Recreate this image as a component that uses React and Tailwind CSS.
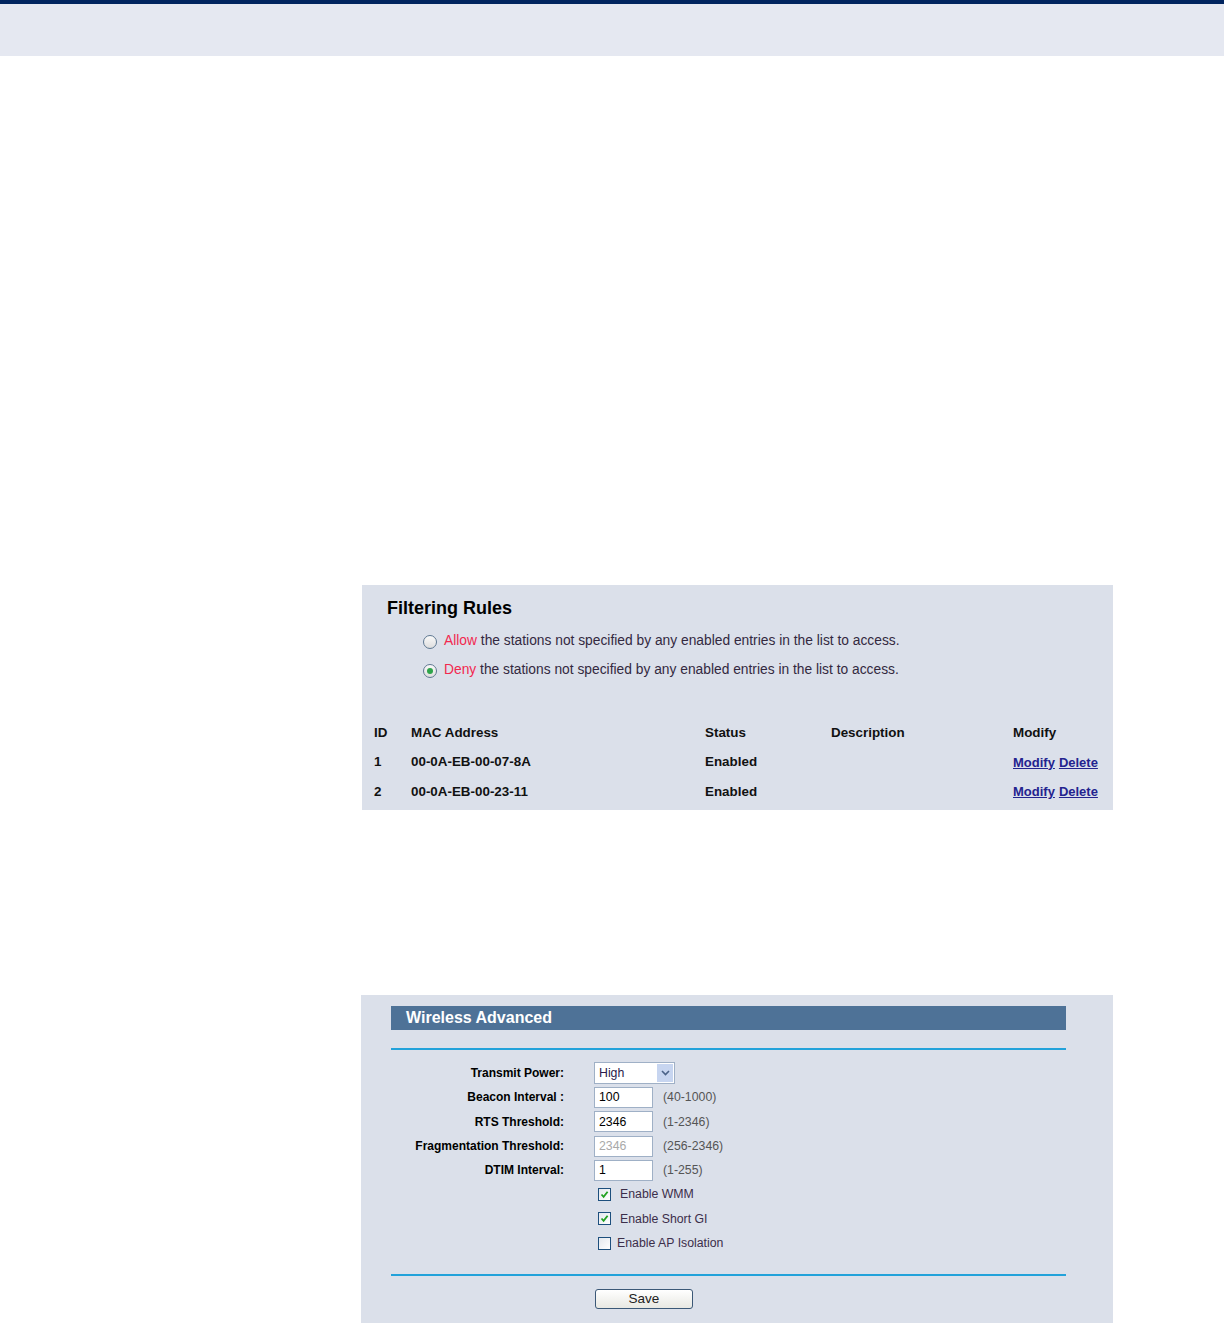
import { Fragment } from "react";

const rules = [
  { id: "1", mac: "00-0A-EB-00-07-8A", status: "Enabled", desc: "" },
  { id: "2", mac: "00-0A-EB-00-23-11", status: "Enabled", desc: "" },
];

const Radio = ({ checked }) => (
  <span className="flex h-[14px] w-[14px] items-center justify-center rounded-full border border-[#5f7891] bg-gradient-to-b from-[#fafafa] to-[#dedede]">
    {checked && <span className="h-[6px] w-[6px] rounded-full bg-[#2ea44a]" />}
  </span>
);

const Check = ({ checked }) => (
  <span className="flex h-[13px] w-[13px] items-center justify-center border border-[#1d4f7d] bg-gradient-to-br from-[#e4e8ee] to-[#ffffff]">
    {checked && (
      <svg width="9" height="9" viewBox="0 0 9 9">
        <path d="M1.5 4.5 L3.6 6.8 L7.6 1.8" fill="none" stroke="#21a121" strokeWidth="1.8" />
      </svg>
    )}
  </span>
);

const TextBox = ({ value, disabled }) => (
  <div
    className={`flex h-[21px] w-[59px] items-center border border-[#9fb0c6] bg-white px-[4px] text-[12.3px] ${
      disabled ? "text-[#a9a9a9]" : "text-black"
    }`}
  >
    {value}
  </div>
);

const FormRow = ({ label, children, hint }) => (
  <div className="flex h-[24.3px] items-center">
    <div className="w-[173px] text-right text-[12px] font-bold text-black">{label}</div>
    <div className="ml-[30px] flex items-center">
      {children}
      {hint && <span className="ml-[10px] text-[12.3px] text-[#555]">{hint}</span>}
    </div>
  </div>
);

const CheckRow = ({ checked, label, gap }) => (
  <div className="flex h-[24.3px] items-center">
    <div className="ml-[207px] flex items-center">
      <Check checked={checked} />
      <span className={`${gap} text-[12.3px] text-[#3b2e4a]`}>{label}</span>
    </div>
  </div>
);

export default function App() {
  return (
    <div className="relative h-[1323px] w-[1224px] overflow-hidden bg-white font-['Liberation_Sans',Arial,sans-serif]">
      <div className="h-[4px] bg-[#00245f]" />
      <div className="h-[52px] bg-[#e5e8f1]" />

      {/* Filtering rules */}
      <div className="ml-[362px] mt-[529px] h-[225px] w-[751px] bg-[#dbe0ea] pt-[12px]">
        <div className="pl-[25px] text-[18px] font-bold leading-[22px] text-black">Filtering Rules</div>
        <div className="mt-[8px] pl-[61px] text-[13.8px] text-[#33293f]">
          <div className="flex h-[29px] items-center gap-[7px]">
            <Radio />
            <span>
              <span className="text-[#f2284f]">Allow</span> the stations not specified by any enabled entries in the list to access.
            </span>
          </div>
          <div className="flex h-[29px] items-center gap-[7px]">
            <Radio checked />
            <span>
              <span className="text-[#f2284f]">Deny</span> the stations not specified by any enabled entries in the list to access.
            </span>
          </div>
        </div>
        <div className="mt-[33px] grid grid-cols-[37px_294px_126px_182px_1fr] pl-[12px] text-[13.4px] font-bold text-[#111]">
          <div className="flex h-[29.5px] items-center">ID</div>
          <div className="flex h-[29.5px] items-center">MAC Address</div>
          <div className="flex h-[29.5px] items-center">Status</div>
          <div className="flex h-[29.5px] items-center">Description</div>
          <div className="flex h-[29.5px] items-center">Modify</div>
          {rules.map((r) => (
            <Fragment key={r.id}>
              <div className="flex h-[29.5px] items-center">{r.id}</div>
              <div className="flex h-[29.5px] items-center">{r.mac}</div>
              <div className="flex h-[29.5px] items-center">{r.status}</div>
              <div className="flex h-[29.5px] items-center">{r.desc}</div>
              <div className="flex h-[29.5px] items-center gap-[4px] text-[13px] text-[#23238f]">
                <a className="underline">Modify</a>
                <a className="underline">Delete</a>
              </div>
            </Fragment>
          ))}
        </div>
      </div>

      {/* Wireless advanced */}
      <div className="ml-[361px] mt-[185px] h-[328px] w-[752px] bg-[#dbe0ea] pl-[30px] pt-[11px]">
        <div className="flex h-[24px] w-[675px] items-center bg-[#4e7297] pl-[15px] text-[16px] font-bold text-white">
          Wireless Advanced
        </div>
        <div className="mt-[18px] h-[2px] w-[675px] bg-[#22a2da]" />
        <div className="mt-[11px]">
          <FormRow label="Transmit Power:">
            <div className="flex h-[22px] w-[81px] items-center justify-between border border-[#9fb0c6] bg-white pl-[4px] pr-[1px] text-[12.3px] text-[#2a1a4a]">
              <span>High</span>
              <span className="flex h-[18px] w-[16px] items-center justify-center bg-[#c7d5f0]">
                <svg width="9" height="6" viewBox="0 0 9 6">
                  <path d="M1 1 L4.5 4.5 L8 1" fill="none" stroke="#4a6288" strokeWidth="1.6" />
                </svg>
              </span>
            </div>
          </FormRow>
          <FormRow label="Beacon Interval :" hint="(40-1000)">
            <TextBox value="100" />
          </FormRow>
          <FormRow label="RTS Threshold:" hint="(1-2346)">
            <TextBox value="2346" />
          </FormRow>
          <FormRow label="Fragmentation Threshold:" hint="(256-2346)">
            <TextBox value="2346" disabled />
          </FormRow>
          <FormRow label="DTIM Interval:" hint="(1-255)">
            <TextBox value="1" />
          </FormRow>
          <CheckRow checked label="Enable WMM" gap="ml-[9px]" />
          <CheckRow checked label="Enable Short GI" gap="ml-[9px]" />
          <CheckRow label="Enable AP Isolation" gap="ml-[6px]" />
        </div>
        <div className="mt-[19px] h-[2px] w-[675px] bg-[#22a2da]" />
        <button className="ml-[204px] mt-[13px] flex h-[20px] w-[98px] items-center justify-center rounded-[3px] border border-[#3b5877] bg-gradient-to-b from-[#ffffff] to-[#e8e8e2] text-[13.5px] text-[#222]">
          Save
        </button>
      </div>
    </div>
  );
}
